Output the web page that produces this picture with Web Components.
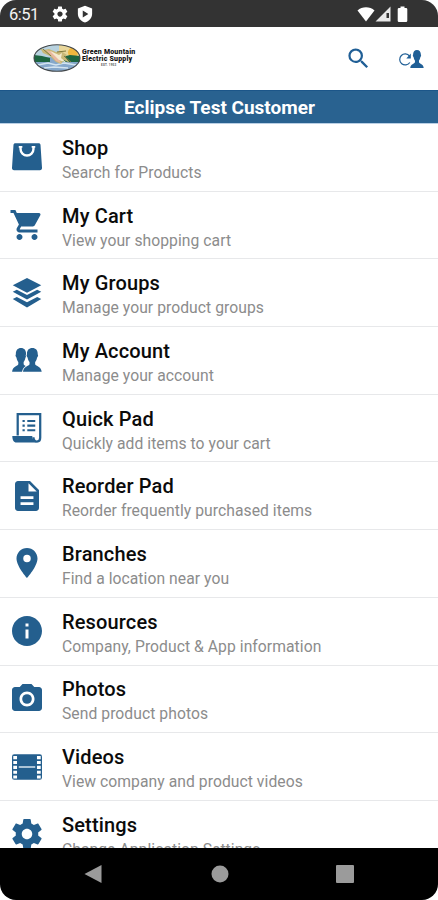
<!DOCTYPE html>
<html lang="en">
<head>
<meta charset="utf-8">
<title>Eclipse Test Customer</title>
<style>
html,body{margin:0;background:#fff}
body{width:438px;height:900px;overflow:hidden;font-family:Roboto,"Liberation Sans",sans-serif}
</style>
</head>
<body>
<phone-screen>
  <status-bar slot="status" time="6:51"></status-bar>
  <app-header slot="header"></app-header>
  <customer-banner slot="banner">Eclipse Test Customer</customer-banner>
  <menu-row icon="shop">Shop<span slot="sub">Search for Products</span></menu-row>
  <menu-row icon="cart">My Cart<span slot="sub">View your shopping cart</span></menu-row>
  <menu-row icon="layers">My Groups<span slot="sub">Manage your product groups</span></menu-row>
  <menu-row icon="people">My Account<span slot="sub">Manage your account</span></menu-row>
  <menu-row icon="receipt">Quick Pad<span slot="sub">Quickly add items to your cart</span></menu-row>
  <menu-row icon="file">Reorder Pad<span slot="sub">Reorder frequently purchased items</span></menu-row>
  <menu-row icon="pin">Branches<span slot="sub">Find a location near you</span></menu-row>
  <menu-row icon="info">Resources<span slot="sub">Company, Product &amp; App information</span></menu-row>
  <menu-row icon="camera">Photos<span slot="sub">Send product photos</span></menu-row>
  <menu-row icon="film">Videos<span slot="sub">View company and product videos</span></menu-row>
  <menu-row icon="gear">Settings<span slot="sub">Change Application Settings</span></menu-row>
  <nav-bar slot="nav"></nav-bar>
</phone-screen>
<script>
const GEAR = 'M19.43 12.98c.04-.32.07-.64.07-.98s-.03-.66-.07-.98l2.11-1.65c.19-.15.24-.42.12-.64l-2-3.46c-.12-.22-.39-.3-.61-.22l-2.49 1c-.52-.4-1.08-.73-1.69-.98l-.38-2.65C14.46 2.18 14.25 2 14 2h-4c-.25 0-.46.18-.49.42l-.38 2.65c-.61.25-1.17.59-1.69.98l-2.49-1c-.23-.09-.49 0-.61.22l-2 3.46c-.13.22-.07.49.12.64l2.11 1.65c-.04.32-.07.65-.07.98s.03.66.07.98l-2.11 1.65c-.19.15-.24.42-.12.64l2 3.46c.12.22.39.3.61.22l2.49-1c.52.4 1.08.73 1.69.98l.38 2.65c.03.24.24.42.49.42h4c.25 0 .46-.18.49-.42l.38-2.65c.61-.25 1.17-.59 1.69-.98l2.49 1c.23.09.49 0 .61-.22l2-3.46c.12-.22.07-.49-.12-.64l-2.11-1.65zM12 15.5c-1.93 0-3.5-1.57-3.5-3.5s1.570-3.500 3.500-3.500 3.500 1.570 3.500 3.500-1.570 3.500-3.500 3.500z';
const PERSON = 'M12 2.500c-3 0-4.600 1.900-4.600 4.700 0 .7-.4.700-.3 1.500.1.700.5 1.200.9 1.500.3 1.700.9 2.700 1.600 3.500v1.800c-.7 1.600-5.100 1.700-5.600 6h16c-.5-4.300-4.900-4.400-5.600-6v-1.800c.7-.8 1.300-1.800 1.600-3.500.4-.3.800-.8.900-1.500.1-.8-.3-.8-.3-1.500 0-2.800-1.600-4.700-4.600-4.700z';
const ICONS = {
  shop:'<path d="M4.300 2.800h15.400c.8 0 1.200.4 1.300 1.100l1 15.300c.1 1-.5 1.600-1.400 1.600H3.400c-.9 0-1.500-.6-1.400-1.600L3 3.900c.1-.7.500-1.100 1.300-1.100z"/><path d="M7.700 5.400v1.300a4.300 4.300 0 0 0 8.600 0V5.400" fill="none" stroke="#fff" stroke-width="1.600"/><path d="M6.500 5.200h2.400M15.100 5.200h2.400" stroke="#fff" stroke-width="1.200"/>',
  cart:'<path d="M7 18c-1.100 0-1.990.9-1.990 2S5.900 22 7 22s2-.9 2-2-.9-2-2-2zM1 2v2h2l3.600 7.590-1.350 2.450c-.16.280-.250.610-.250.960 0 1.100.9 2 2 2h12v-2H7.420c-.14 0-.250-.110-.250-.250l.030-.120.900-1.630h7.450c.750 0 1.410-.410 1.750-1.030l3.580-6.490A1.003 1.003 0 0 0 20 4H5.210l-.940-2H1zm16 16c-1.100 0-1.990.9-1.990 2s.890 2 1.990 2 2-.9 2-2-.9-2-2-2z"/>',
  layers:'<path d="M12 2 2.500 6.900 12 11.800l9.500-4.900zM2.500 11.200l2.700-1.400 6.800 3.500 6.800-3.500 2.700 1.400-9.500 5.100zM2.500 16l2.700-1.400 6.800 3.500 6.800-3.500 2.700 1.400-9.500 5.600z"/>',
  people:'<g transform="translate(-.9 2) scale(.74 .83)"><path d="'+PERSON+'"/></g><g transform="translate(6.200 2) scale(.78 .83)"><path d="'+PERSON+'" stroke="#fff" stroke-width="1.500" paint-order="stroke"/></g>',
  receipt:'<path d="M5.800 17V2.700h15v15.800c0 1.600-.8 2.500-2.200 2.500-1.700 0-2.300-1.200-2.300-2.800" fill="none" stroke="currentColor" stroke-width="1.500"/><path d="M2.200 17.300h13.300c0 2 .8 3.400 2.700 4.400H5c-1.900 0-2.800-1.900-2.800-4.400z"/><path d="M9 7.300h1.500m1.700 0h5.300M9 10.400h1.500m1.700 0h5.300M9 13.500h1.500m1.700 0h5.300" fill="none" stroke="currentColor" stroke-width="1.400"/>',
  file:'<path d="M14 2H6c-1.100 0-1.990.9-1.990 2L4 20c0 1.100.890 2 1.990 2H18c1.100 0 2-.9 2-2V8l-6-6zm2.300 16H7.700v-1.800h8.600V18zm0-4H7.700v-1.800h8.600V14zM13 9V3.500L18.500 9H13z"/>',
  pin:'<path d="M12 2C8.130 2 5 5.130 5 9c0 5.250 7 13 7 13s7-7.750 7-13c0-3.870-3.130-7-7-7zm0 9.500a2.500 2.500 0 0 1 0-5 2.500 2.500 0 0 1 0 5z"/>',
  info:'<path d="M12 2C6.480 2 2 6.480 2 12s4.480 10 10 10 10-4.480 10-10S17.520 2 12 2zm1 15h-2v-6h2v6zm0-8h-2V7h2v2z"/>',
  camera:'<path d="M9 2 7.170 4H4c-1.100 0-2 .9-2 2v12c0 1.100.9 2 2 2h16c1.100 0 2-.9 2-2V6c0-1.100-.9-2-2-2h-3.170L15 2H9zm3 15c-2.760 0-5-2.240-5-5s2.240-5 5-5 5 2.240 5 5-2.240 5-5 5z"/><circle cx="12" cy="12" r="3.200"/>',
  film:'<rect x="2" y="3.500" width="20" height="17" rx="1.500"/><path d="M6.500 12h11" stroke="#d8e4ee" stroke-width="1"/><path d="M4.100 4.700v15M19.900 4.700v15" stroke="#fff" stroke-width="2.500" stroke-dasharray="2.100 1.150"/>',
  gear:'<path d="'+GEAR+'"/>'
};
const define = (name, render) => customElements.define(name, class extends HTMLElement {
  connectedCallback(){ if(!this.shadowRoot) this.attachShadow({mode:'open'}).innerHTML = render(this); }
});

define('phone-screen', () => `<style>
:host{display:grid;grid-template-rows:27px 63px 34px 723.500px 52.500px;width:438px;height:900px;overflow:hidden;border-radius:16px;background:#fff}
main{overflow:hidden;display:flex;flex-direction:column}
</style><slot name="status"></slot><slot name="header"></slot><slot name="banner"></slot><main><slot></slot></main><slot name="nav"></slot>`);

define('status-bar', el => `<style>
:host{display:flex;align-items:center;background:#333;color:#fff;padding:1px 29px 0 9px;box-sizing:border-box}
time{font-size:16.500px;line-height:27px;width:42px;letter-spacing:-.5px;color:#f4f4f4}
svg{fill:#fff;display:block}
.l{display:flex;gap:7px;flex:1}.r{display:flex;align-items:center}.r svg:last-child{margin-left:4px}
</style><time>${el.getAttribute('time')}</time>
<div class="l"><svg width="18" height="18" viewBox="0 0 24 24"><path d="${GEAR}"/></svg>
<svg width="18" height="18" viewBox="0 0 24 24"><path d="M12 1 2.500 4.500v7c0 5.500 4 10 9.500 11.700 5.500-1.700 9.500-6.200 9.500-11.700v-7zM9 7.300l7.500 4.700L9 16.700z" fill-rule="evenodd"/></svg></div>
<div class="r"><svg width="18" height="16" viewBox="0 0 18 16"><path d="M.5 4.500C5 .2 13 .2 17.500 4.500L9 15.500z"/></svg>
<svg width="17" height="16" viewBox="0 0 17 16"><path d="M15.500.500V15.500H.5zM11.500 7v5h2.500V7z" fill-rule="evenodd" fill="#e8e8e8"/></svg>
<svg width="13" height="17" viewBox="0 0 13 17"><path d="M4.500.500h4v1.500H10q1.300 0 1.300 1.300v11.400q0 1.300-1.300 1.300H3q-1.300 0-1.300-1.300V3.300Q1.700 2 3 2h1.500z"/></svg></div>`);

define('company-logo', () => `<style>
:host{display:flex;align-items:center;gap:1px;color:#151515}
svg{display:block}
.t{display:flex;flex-direction:column;font:900 7px/7px Roboto,sans-serif;letter-spacing:.2px;white-space:nowrap;padding-top:1px}
small{font:700 3px/5px Roboto,sans-serif;align-self:center;color:#555}
</style><svg width="48" height="30" viewBox="0 0 48 30"><defs><clipPath id="c"><ellipse cx="24" cy="15" rx="23" ry="13.300"/></clipPath></defs>
<g clip-path="url(#c)"><path fill="#b8d2df" d="M0 0h48v15H0z"/><path fill="#e9d79b" d="M26 0h22v14H26z"/><circle cx="40" cy="9.500" r="5" fill="#f0b63f"/><path fill="#86a8cb" d="M0 14h48v16H0z"/><path fill="#1d6541" d="M0 12l9 1 8 2v4H0zM29 14l8-2 11 1v6H27z"/><path d="M5 22l10-2 8 2 8-2 12 2M11 25l10-1 14 1" fill="none" stroke="#d3e4f0" stroke-width="1.500"/></g>
<path d="M7 5l4 2 5-1 7 3 5-1 6 4-2 2 5 6-6-3-3 4-5-2-6-6-7-3z" fill="#c9b878"/><path d="M13 7l7 2 5 6 3 5-5-2-5-6z" fill="#e9b7a0"/><path d="M17 8l9 4 3-2-1 5 6 5-8-3z" fill="#f4ead0"/><path d="M10 6l8 7M24 9l9-1M31 13l7 6" stroke="#80783e" fill="none"/>
<ellipse cx="24" cy="15" rx="23" ry="13.300" fill="none" stroke="#42474a" stroke-width="1.100"/></svg><div class="t"><span>Green Mountain</span><span>Electric Supply</span><small>EST. 1953</small></div>`);

define('app-header', () => `<style>
:host{display:flex;align-items:center;background:#fff;color:#205f96;padding:0 12px 0 33px}
company-logo{flex:1;margin-top:-1px}
svg{display:block;fill:currentColor}
.s{margin-right:26px}
</style><company-logo></company-logo>
<svg class="s" width="27" height="27" viewBox="0 0 24 24"><path d="M15.500 14h-.790l-.280-.270A6.471 6.471 0 0 0 16 9.500 6.500 6.500 0 1 0 9.500 16c1.610 0 3.090-.590 4.230-1.570l.270.280v.790l5 4.990L20.490 19l-4.990-5zm-6 0C7.010 14 5 11.990 5 9.500S7.010 5 9.500 5 14 7.010 14 9.500 11.990 14 9.500 14z"/></svg>
<svg width="28" height="24" viewBox="0 0 28 24"><path d="M11.500 9A5.500 5.500 0 1 0 11.800 15.500" fill="none" stroke="currentColor" stroke-width="1.200"/><path d="M12.800 6.500v5H8.300z"/><g transform="translate(8.900 .5) scale(.84 .95)"><path d="${PERSON}" stroke="#fff" stroke-width="1.200" paint-order="stroke"/></g></svg>`);

define('customer-banner', () => `<style>
:host{display:block;box-sizing:border-box;background:#296290;color:#fff;font-weight:700;font-size:19px;line-height:34px;text-align:center;border-top:1px solid #1c5689;border-bottom:1px solid #b9cfe4;padding-left:1px}
</style><slot></slot>`);

define('menu-row', el => `<style>
:host{display:flex;flex:none;align-items:center;box-sizing:border-box;height:67.700px;padding-left:9px;border-bottom:1.500px solid #e7e8ea;color:#245f8e}
svg{width:36px;height:36px;fill:currentColor;flex:none}
div{margin-left:17px;white-space:nowrap;padding-top:6px}
h2{margin:0;font-weight:500;font-size:20px;line-height:24px;color:#0b0b0b;letter-spacing:.15px}
p{margin:0;font-size:15.700px;line-height:25px;color:#8c8c8c;letter-spacing:.05px}
</style><svg viewBox="0 0 24 24">${ICONS[el.getAttribute('icon')]}</svg><div><h2><slot></slot></h2><p><slot name="sub"></slot></p></div>`);

define('nav-bar', () => `<style>
:host{display:flex;background:#000;align-items:center;padding:0 30px}
svg{display:block;margin:auto;fill:#9b9b9b}
</style><svg width="20" height="20" viewBox="0 0 20 20"><path d="M.5 10 17.500 1v18z"/></svg><svg width="18" height="18" viewBox="0 0 18 18"><circle cx="9" cy="9" r="8.500"/></svg><svg width="18" height="18" viewBox="0 0 18 18"><rect width="18" height="18" rx="1"/></svg>`);
</script>
</body>
</html>
